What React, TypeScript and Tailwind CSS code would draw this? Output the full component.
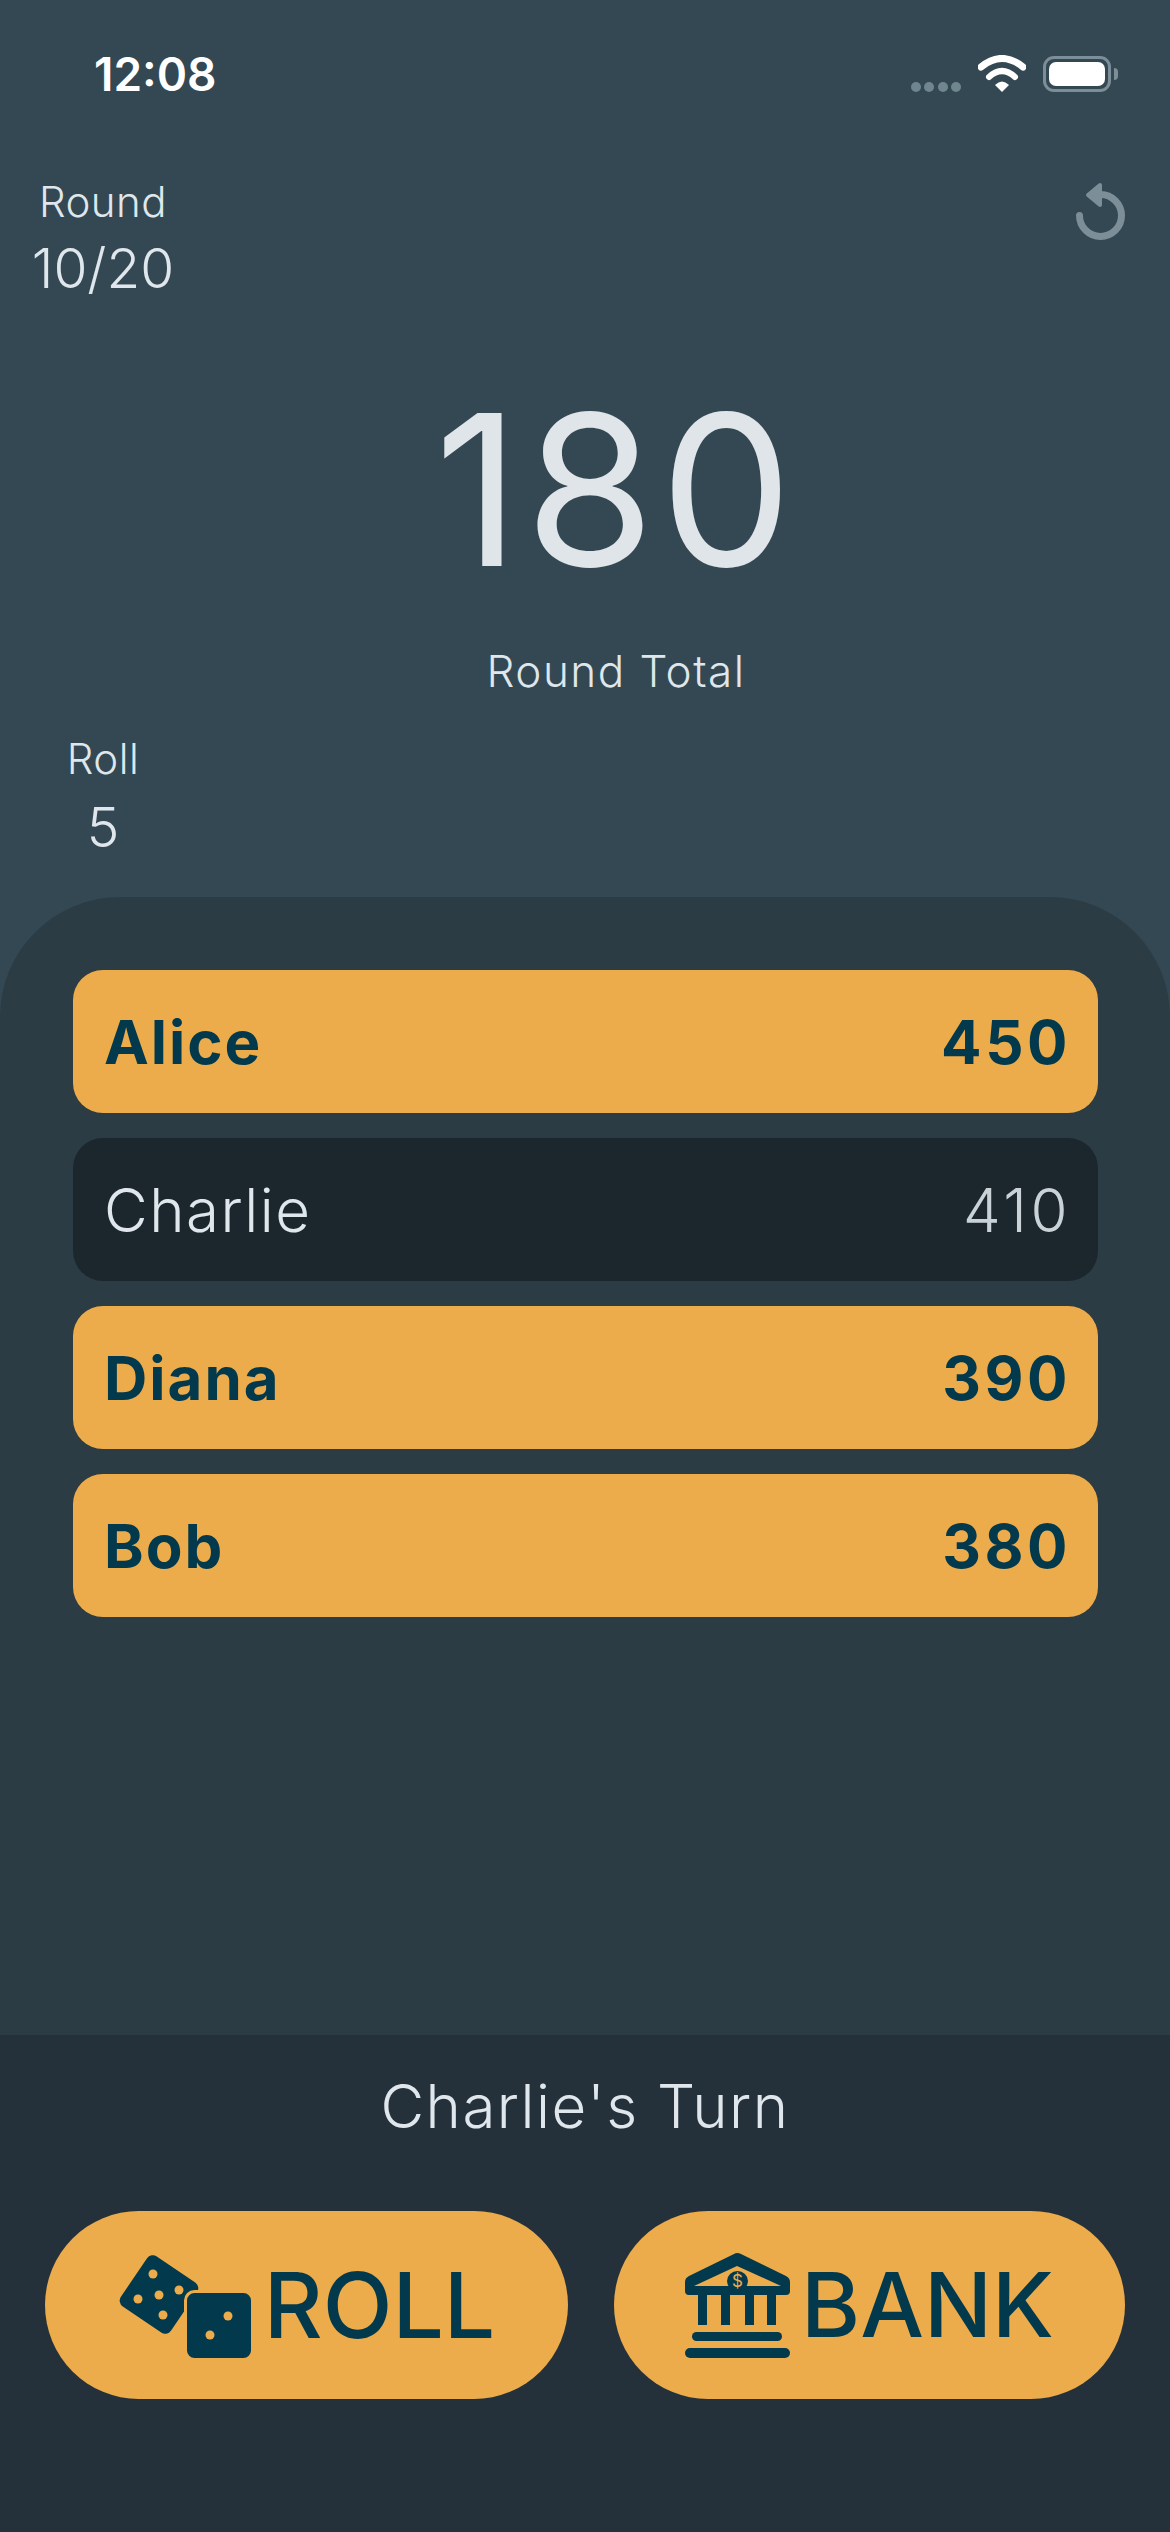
const players = [
    { name: "Alice", score: 450, banked: true },
    { name: "Charlie", score: 410, banked: false },
    { name: "Diana", score: 390, banked: true },
    { name: "Bob", score: 380, banked: true },
];

function WifiIcon() {
    return (
        <svg width="48" height="37" viewBox="0 0 48 37" fill="none" className="block">
            <path d="M3 12Q24 -5 45 12" stroke="#ffffff" strokeWidth="7" strokeLinecap="round" />
            <path d="M11 22Q24 10 37 22" stroke="#ffffff" strokeWidth="6" strokeLinecap="round" />
            <path d="M24 37L17 30Q24 23 31 30Z" fill="#ffffff" />
        </svg>
    );
}

function UndoIcon() {
    return (
        <svg width="49" height="58" viewBox="0 0 49 58" fill="none" className="block">
            <path d="M3.5 33.5A21 21 0 1 0 24.5 12.5" stroke="#7c8f98" strokeWidth="7" strokeLinecap="round" />
            <path d="M24 3L24 23L12 13Z" fill="#7c8f98" stroke="#7c8f98" strokeWidth="4" strokeLinejoin="round" />
        </svg>
    );
}

function DiceIcon() {
    return (
        <svg width="133" height="105" viewBox="0 0 133 105" className="block shrink-0">
            <rect x="10.75" y="11.25" width="60.5" height="60.5" rx="7" fill="#03394d" transform="rotate(34.2 41 41.5)" />
            <rect x="67.5" y="38.5" width="67" height="68" rx="9" fill="#03394d" stroke="#edac4b" strokeWidth="3" />
            {[[35, 21], [61, 37], [41, 42], [20, 46], [45, 62], [110, 63], [92, 82]].map(([cx, cy]) => (
                <circle key={cx} cx={cx} cy={cy} r="4.5" fill="#edac4b" />
            ))}
        </svg>
    );
}

function BankIcon() {
    return (
        <svg width="105" height="105" viewBox="0 0 105 105" className="block shrink-0">
            <path fillRule="evenodd" d="M49 1Q52 -1 56 1L101 23Q105 25 105 29V38Q105 42 101 42H4Q0 42 0 38V29Q0 25 4 23ZM52 13L9 33H96Z" fill="#03394d" />
            <ellipse cx="52.5" cy="28" rx="10.5" ry="10" fill="#03394d" />
            <text x="52.5" y="34" textAnchor="middle" fontSize="17" fontFamily="Inter, sans-serif" fill="#edac4b">$</text>
            <rect x="13" y="42" width="9" height="30" fill="#03394d" />
            <rect x="36" y="42" width="9" height="30" fill="#03394d" />
            <rect x="60" y="42" width="9" height="30" fill="#03394d" />
            <rect x="82" y="42" width="9" height="30" fill="#03394d" />
            <rect x="7" y="79" width="90" height="9" rx="4.5" fill="#03394d" />
            <rect x="0" y="95" width="105" height="10" rx="5" fill="#03394d" />
        </svg>
    );
}

export default function App() {
    return (
        <div className="flex h-[2532px] w-[1170px] flex-col overflow-hidden bg-[#344853] [font-family:Inter,sans-serif]">
            {/* Status bar */}
            <div className="flex h-[132px] items-start justify-between pt-[49px] pr-[52px] pl-[94px]">
                <span className="text-[46px] leading-[50px] font-semibold text-white">12:08</span>
                <div className="flex items-start">
                    <div className="mt-[33px] mr-[17px] flex gap-[3.5px]">
                        <span className="h-[10px] w-[10px] rounded-full bg-[#6f868f]" />
                        <span className="h-[10px] w-[10px] rounded-full bg-[#6f868f]" />
                        <span className="h-[10px] w-[10px] rounded-full bg-[#6f868f]" />
                        <span className="h-[10px] w-[10px] rounded-full bg-[#6f868f]" />
                    </div>
                    <div className="mt-[6px]">
                        <WifiIcon />
                    </div>
                    <div className="mt-[7px] ml-[17px] flex items-center gap-[3px]">
                        <div className="flex h-[36px] w-[68px] items-center justify-center rounded-[11px] border-[3px] border-[#7c8f98]">
                            <div className="h-[24px] w-[56px] rounded-[7px] bg-white" />
                        </div>
                        <div className="h-[12px] w-[4px] rounded-r-full bg-[#7c8f98]" />
                    </div>
                </div>
            </div>

            {/* Round info */}
            <div className="flex h-[765px] flex-col">
                <div className="flex items-start justify-between pr-[45px]">
                    <div className="flex w-[206px] flex-col items-center text-[#dfe7ec]">
                        <span className="mt-[46px] text-[42px] leading-[48px] font-[350] tracking-[0.5px]">Round</span>
                        <span className="mt-[11px] text-[55px] leading-[62px] font-[350]">10/20</span>
                    </div>
                    <div className="mt-[50px]">
                        <UndoIcon />
                    </div>
                </div>
                <div className="flex flex-col items-center pl-[62px] text-[#dfe7ec]">
                    <span className="mt-[71px] text-[210px] leading-[240px] font-normal tracking-[5px] text-[#dfe5e9]">180</span>
                    <span className="mt-[36px] text-[44px] leading-[50px] font-[350] tracking-[1.5px]">Round Total</span>
                </div>
                <div className="flex w-[206px] flex-col items-center text-[#dfe7ec]">
                    <span className="mt-[40px] text-[42px] leading-[46px] font-[350] tracking-[0.5px]">Roll</span>
                    <span className="mt-[14px] text-[55px] leading-[62px] font-[350]">5</span>
                </div>
            </div>

            {/* Scores */}
            <div className="flex h-[1138px] flex-col gap-[25px] rounded-t-[120px] bg-[#2c3c45] pt-[73px] pr-[72px] pl-[73px]">
                {players.map((p) => (
                    <div
                        key={p.name}
                        className={
                            p.banked
                                ? "flex h-[143px] items-center justify-between rounded-[30px] bg-[#edac4b] pr-[27px] pl-[31px] text-[60px] font-bold tracking-[2px] text-[#03394d]"
                                : "flex h-[143px] items-center justify-between rounded-[30px] bg-[#1c272d] pr-[27px] pl-[31px] text-[60px] font-[350] tracking-[1.5px] text-[#dfe7ec]"
                        }
                    >
                        <span>{p.name}</span>
                        <span className={p.banked ? "tracking-[3.5px]" : "tracking-[3.5px] text-[#c9d2d7]"}>{p.score}</span>
                    </div>
                ))}
            </div>

            {/* Turn and actions */}
            <div className="flex flex-1 flex-col bg-[#25313a] px-[45px]">
                <div className="mt-[38px] text-center text-[60px] leading-[66px] font-[350] tracking-[1.5px] text-[#dfe7ec]">Charlie's Turn</div>
                <div className="mt-[72px] flex justify-between">
                    <div className="flex h-[188px] w-[523px] items-center justify-center gap-[13px] rounded-full bg-[#edac4b]">
                        <DiceIcon />
                        <span className="text-[91px] leading-none font-[450] text-[#03394d]">ROLL</span>
                    </div>
                    <div className="flex h-[188px] w-[511px] items-center justify-center gap-[11px] rounded-full bg-[#edac4b]">
                        <BankIcon />
                        <span className="text-[90px] leading-none font-[450] text-[#03394d]">BANK</span>
                    </div>
                </div>
            </div>
        </div>
    );
}
